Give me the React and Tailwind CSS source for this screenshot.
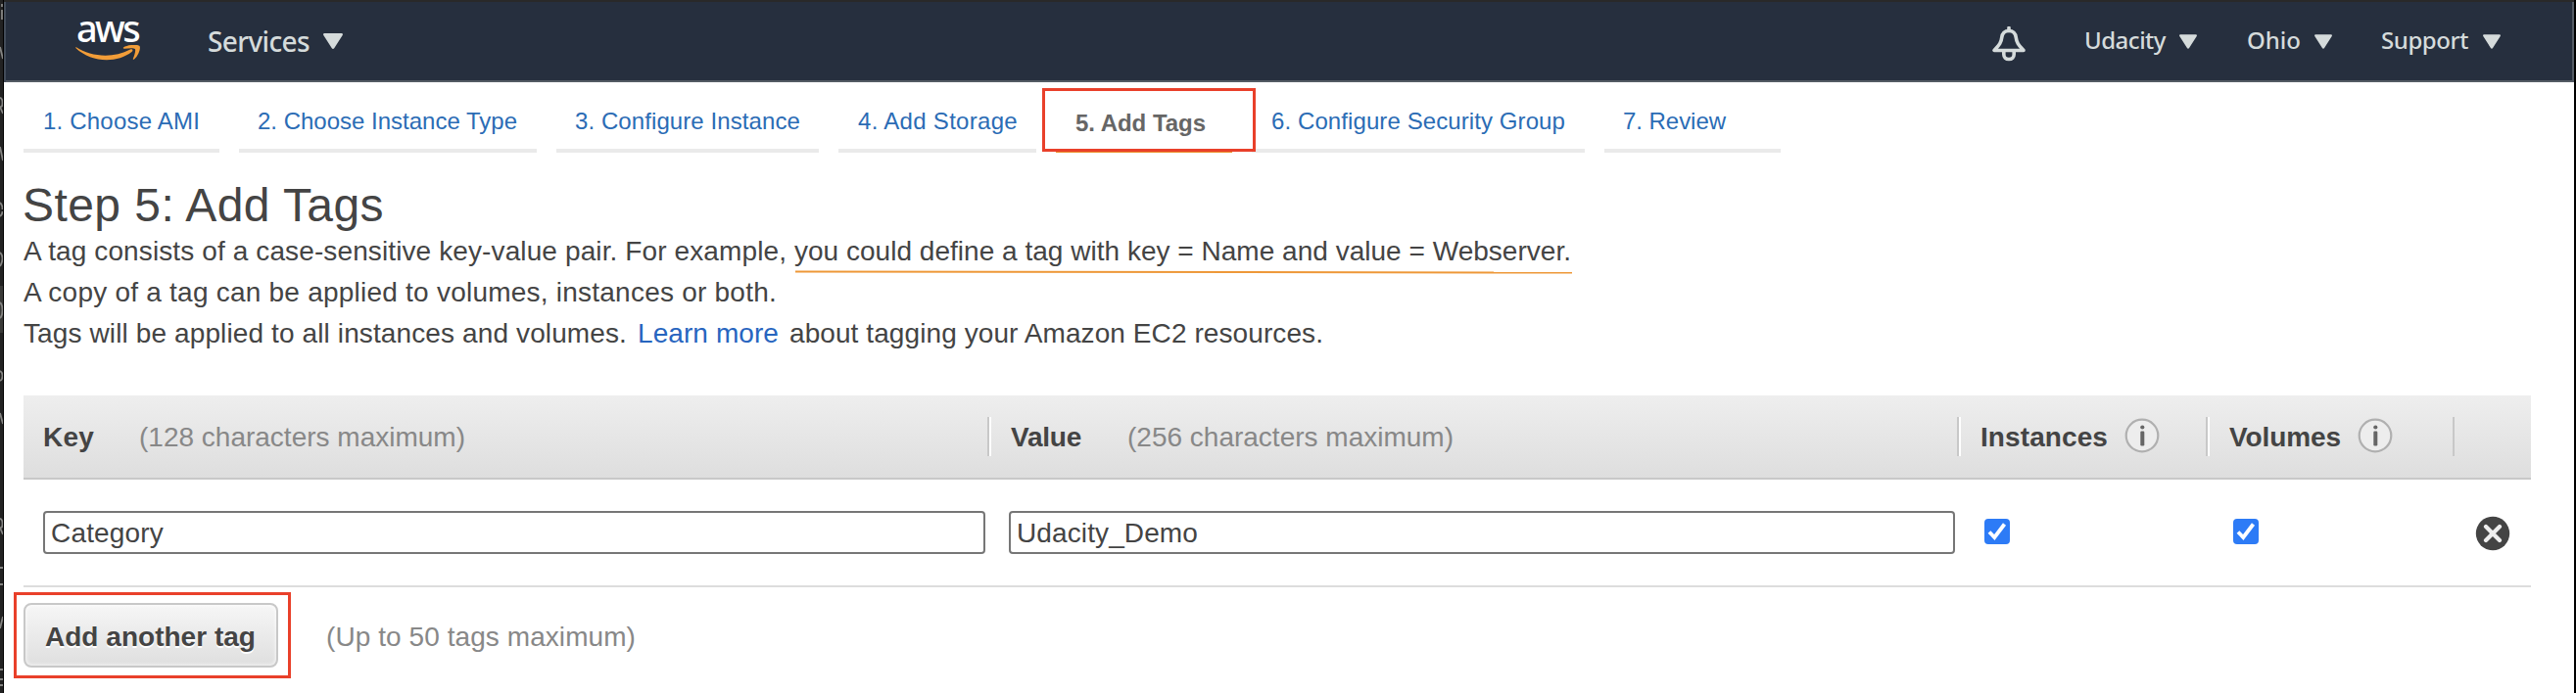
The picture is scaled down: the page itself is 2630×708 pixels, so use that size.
import React from "react";

// One line of text whose advance width is pinned to the given number of pixels.
function Fit({ w, children, className = "" }) {
  const ref = React.useRef(null);
  const [sp, setSp] = React.useState(0);
  React.useLayoutEffect(() => {
    const n = children.length;
    const natural = ref.current.getBoundingClientRect().width;
    setSp((w - natural) / n);
  }, []);
  return (
    <span ref={ref} className={"inline-block whitespace-pre " + className} style={{ letterSpacing: sp + "px" }}>
      {children}
    </span>
  );
}

function Caret({ className }) {
  return (
    <svg viewBox="0 0 20 16" className={className} fill="#d5dbdb">
      <path d="M1.5 0h17c1.2 0 1.8 1 1.2 2L11.2 15.2c-.6 1-1.800 1-2.400 0L.3 2C-.3 1 .3 0 1.500 0z" />
    </svg>
  );
}

function Tab({ width, textWidth, label, className = "" }) {
  return (
    <a className={"h-[72px] shrink-0 border-b-4 border-[#eaeaea] pl-[19px] pt-[25px] text-2xl leading-[30px] text-[#2b6cb5] " + className} style={{ width }}>
      <Fit w={textWidth}>{label}</Fit>
    </a>
  );
}

function Info() {
  return (
    <svg viewBox="0 0 36 36" className="-mt-0.5 size-9">
      <circle cx="18" cy="18" r="16.300" fill="#ededed" stroke="#b0b0b0" strokeWidth="2.200" />
      <circle cx="18.300" cy="9.500" r="2.100" fill="#666" />
      <rect x="16.300" y="13.500" width="4" height="15" rx="1.200" fill="#666" />
    </svg>
  );
}

function Check() {
  return (
    <span className="mb-0.5 flex size-[26px] items-center justify-center rounded-[4px] bg-[#2d7bf6]">
      <svg viewBox="0 0 26 26" className="size-[26px]" fill="none" stroke="#fff" strokeWidth="3.800">
        <path d="M5 13.500l5.300 5.500L20.500 5.500" />
      </svg>
    </span>
  );
}

function Sep() {
  return <span className="h-10 w-1 shrink-0 border-l-2 border-r-2 border-l-[#c8c8c8] border-r-white" />;
}

export default function App() {
  return (
    <div className="relative flex h-[708px] w-[2630px] overflow-hidden bg-white font-['Liberation_Sans',Arial,sans-serif] text-[28px] text-[#444]">
      {/* edge of the window behind */}
      <div className="w-1 shrink-0 border-r border-black bg-[#222]">
        <svg viewBox="0 0 3 708" className="h-[708px] w-[3px]" fill="none" stroke="#858583" strokeWidth="1.800">
          <rect x="0" y="292" width="3" height="48" fill="#3a3a38" stroke="none" />
          <path d="M2 4v3M2 10v10M0 48l3 12M0 100q2.500 0 2.500 5t-2.500 4l3 7M0 150l3 14M0 207q2.500 2 2.500 7M0 221q2.500-2 2.500-5M0 258q2.500 2 2.500 6t-2.500 8M0 309q2.500 2 2.500 8t-2.500 8M0 379q2.500 1 2.500 5t-2.500 5M0 422l3 11M0 530q2.500 0 2.500 5t-2.500 4l3 7M0 580h3M0 597h3M0 642l3-12M0 684h3M0 694h3M0 700h3" />
        </svg>
      </div>
      <div className="flex w-[2624px] shrink-0 flex-col">
        <header className="flex h-[84px] shrink-0 items-start border-b-2 border-t-2 border-b-[#545b64] border-t-[#292929] bg-[#262f3e] font-['Noto_Sans','Open_Sans',sans-serif] font-medium text-[#d5dbdb]">
          <div className="ml-[73px] flex w-[66px] flex-col pt-[9px]">
            <span className="pl-px text-[38px] leading-[34px] text-white"><Fit w={63}>aws</Fit></span>
            <svg viewBox="0 0 66 16" className="mt-px h-4 w-[66px]" fill="#f29d38">
              <path d="M.5 2C16 12 38 14 56 4.500c2-1 3.500 1 1.500 2.500C42 19 16 18 .3 3z" />
              <path d="M49 2.500c4-3 15-3.500 16.500-1.500s-1 10-5.500 13.500c-1 .6-1.500 0-1-1 1.500-3.500 2.800-8.300 1.800-9.500s-6.800-.8-10.800-.2c-1.200.1-1.500-.6-1-1.300z" />
            </svg>
          </div>
          <span className="ml-[69px] pt-5 text-[28px] leading-10"><Fit w={104}>Services</Fit></span>
          <Caret className="ml-[14px] mt-8 h-4 w-5" />
          <div className="ml-auto flex">
            <svg viewBox="0 0 36 36" className="mr-[59px] mt-[25px] size-9" fill="none" stroke="#d5dbdb" strokeWidth="3.600">
              <path d="M18 4.500c-4.500 0-6.800 3-7.300 7C10 17.500 7.500 19.500 3 24.500h30c-4.500-5-7-7-7.700-13-.5-4-2.800-7-7.300-7z" strokeLinejoin="round" />
              <path d="M18 4.500V1.500M12.800 25v3.500c0 3 2 5 5.200 5s5.200-2 5.200-5V25" strokeLinecap="round" />
            </svg>
            <span className="pt-[21px] text-2xl leading-9"><Fit w={83}>Udacity</Fit></span>
            <Caret className="ml-[14px] mt-[33px] h-[15px] w-[18px]" />
            <span className="ml-[51px] pt-[21px] text-2xl leading-9"><Fit w={55}>Ohio</Fit></span>
            <Caret className="ml-[14px] mt-[33px] h-[15px] w-[18px]" />
            <span className="ml-[50px] pt-[21px] text-2xl leading-9"><Fit w={89}>Support</Fit></span>
            <Caret className="mr-[75px] ml-[15px] mt-[33px] h-[15px] w-[18px]" />
          </div>
        </header>

        <main className="flex flex-col pl-5">
          <nav className="flex gap-5">
            <Tab width={200} textWidth={160} label="1. Choose AMI" className="pl-5!" />
            <Tab width={304} textWidth={265} label="2. Choose Instance Type" />
            <Tab width={268} textWidth={230} label="3. Configure Instance" />
            <Tab width={202} textWidth={163} label="4. Add Storage" className="pl-5!" />
            <Tab width={180} textWidth={133} label="5. Add Tags" className="border-[#ec912d]! pt-[27px]! pl-5! font-bold text-[#666]!" />
            <Tab width={340} textWidth={300} label="6. Configure Security Group" className="pl-5!" />
            <Tab width={180} textWidth={105} label="7. Review" />
          </nav>

          <h1 className="mt-[25px] h-[57px] text-[48px] leading-[57px]"><Fit w={369} className="-ml-px">Step 5: Add Tags</Fit></h1>
          <div className="-mt-[2px] leading-[42px]">
            <p className="h-[42px] whitespace-pre"><Fit w={787}>{"A tag consists of a case-sensitive key-value pair. For example, "}</Fit><Fit w={793}>you could define a tag with key = Name and value = Webserver.</Fit></p>
            <p className="h-[42px]"><Fit w={769}>A copy of a tag can be applied to volumes, instances or both.</Fit></p>
            <p className="flex h-[42px]">
              <Fit w={616}>Tags will be applied to all instances and volumes.</Fit>
              <a className="ml-[11px] text-[#2765bf]"><Fit w={144}>Learn more</Fit></a>
              <span className="ml-[11px]"><Fit w={545}>about tagging your Amazon EC2 resources.</Fit></span>
            </p>
          </div>

          <div className="mt-[42px] flex h-[86px] w-[2560px] items-center border-b-2 border-[#c8c8c8] bg-linear-to-b from-[#eee] to-[#dedede] font-bold">
            <div className="flex w-[984px] items-center pl-5 pt-[2px]">
              <Fit w={52}>Key</Fit>
              <span className="ml-[46px] font-normal text-[#888]"><Fit w={333}>(128 characters maximum)</Fit></span>
            </div>
            <Sep />
            <div className="flex w-[986px] items-center pl-5 pt-[2px]">
              <Fit w={72}>Value</Fit>
              <span className="ml-[47px] font-normal text-[#888]"><Fit w={333}>(256 characters maximum)</Fit></span>
            </div>
            <Sep />
            <div className="flex w-[250px] items-center pl-5">
              <Fit w={130} className="pt-[2px]">Instances</Fit>
              <span className="ml-[17px]"><Info /></span>
            </div>
            <Sep />
            <div className="flex w-[248px] items-center pl-5">
              <Fit w={114} className="pt-[2px]">Volumes</Fit>
              <span className="ml-[17px]"><Info /></span>
            </div>
            <span className="h-10 w-[2px] bg-[#c8c8c8]" />
          </div>

          <div className="flex h-[110px] w-[2560px] items-center border-b-2 border-[#ddd] pl-5">
            <div className="flex h-11 w-[962px] items-center rounded border-2 border-[#767676] pl-1.5 pt-px"><Fit w={115}>Category</Fit></div>
            <div className="ml-6 flex h-11 w-[966px] items-center rounded border-2 border-[#767676] pl-1.5 pt-px"><Fit w={185}>Udacity_Demo</Fit></div>
            <span className="ml-[30px]"><Check /></span>
            <span className="ml-[228px]"><Check /></span>
            <svg viewBox="0 0 36 36" className="ml-[221px] mt-0.5 size-9">
              <circle cx="18" cy="18" r="17.200" fill="#444" />
              <path d="M11 11l14 14M25 11L11 25" stroke="#eee" strokeWidth="4.200" strokeLinecap="round" />
            </svg>
          </div>

          <div className="mt-4 flex items-center">
            <button className="flex h-[66px] w-[260px] items-center rounded-lg border-2 border-[#c8c8c8] bg-linear-to-b from-[#f6f6f6] to-[#dfdfdf] pl-5 pt-[3px] font-bold shadow-[inset_0_0_4px_#fff] [text-shadow:0_2px_0_#fff]">
              <Fit w={215}>Add another tag</Fit>
            </button>
            <span className="ml-[49px] pt-[3px] text-[#888]"><Fit w={316}>(Up to 50 tags maximum)</Fit></span>
          </div>
        </main>
      </div>
      <div className="h-full w-[2px] shrink-0 bg-black" />

      <div className="absolute left-[1064px] top-[90px] h-[65px] w-[218px] border-[3px] border-[#e9402a]" />
      <div className="absolute left-[14px] top-[605px] h-[88px] w-[283px] border-[3px] border-[#e9402a]" />
      <div className="absolute left-[812px] top-[276.500px] h-[2px] w-[793px] rotate-[0.07deg] bg-[#ee9838]" />
      <div className="absolute left-[4px] top-[2px] h-[82px] w-[2px] bg-[#434c59]" />
      <div className="absolute left-[2626px] top-[2px] h-[82px] w-[2px] bg-[#545b64]" />
    </div>
  );
}
